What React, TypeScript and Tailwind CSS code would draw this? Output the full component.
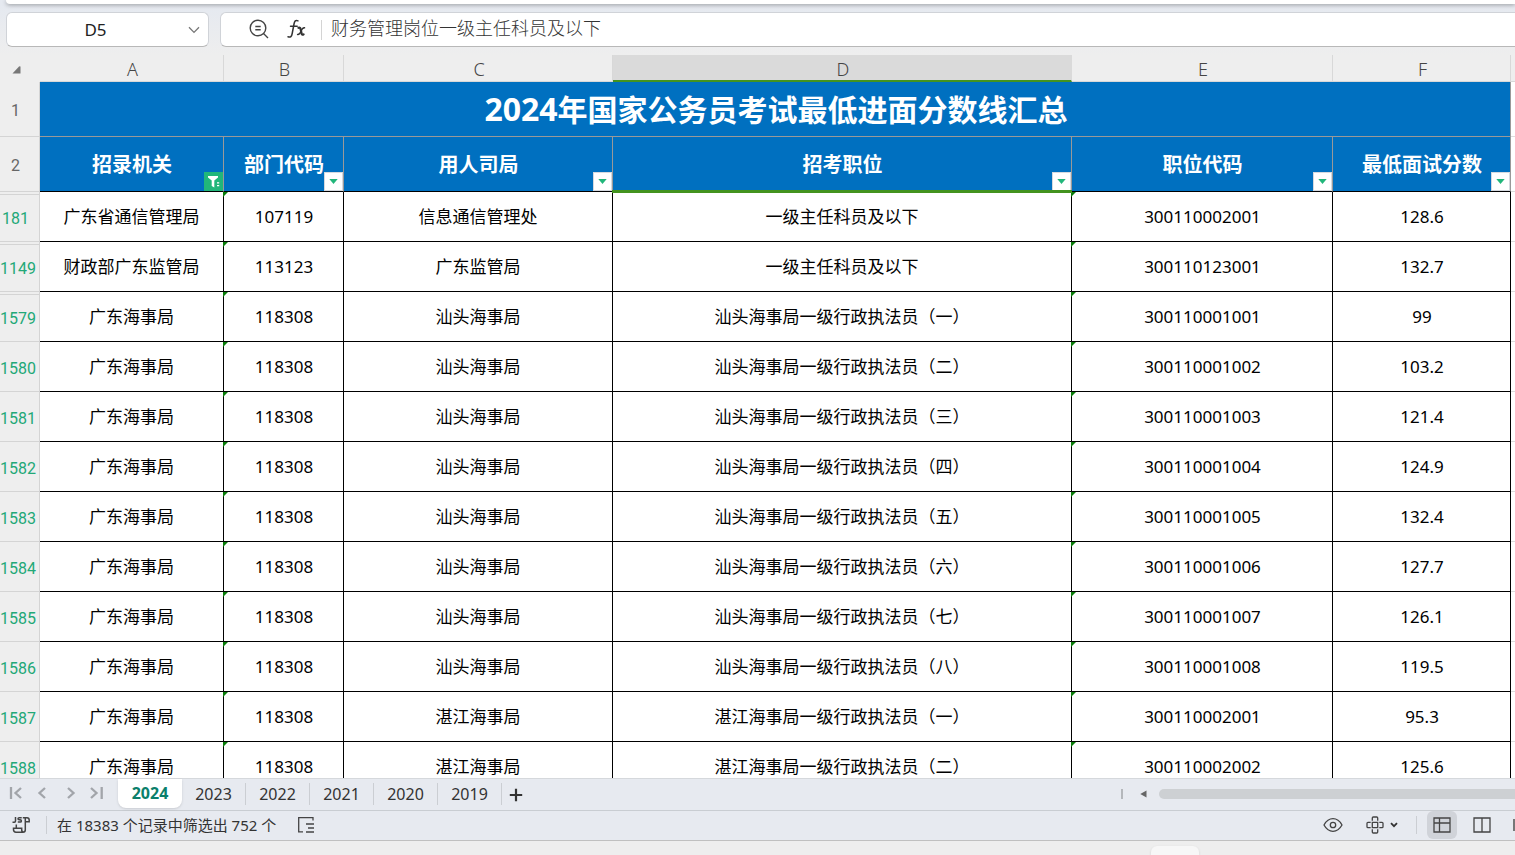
import React from "react";

type Row = {
  n: number;
  gap?: boolean;
  cells: [string, string, string, string, string, string];
};

const haishi = (n: number, bureau: string, ord: string, code: string, score: string, gap = false): Row => ({
  n,
  gap,
  cells: ["广东海事局", "118308", bureau + "海事局", bureau + "海事局一级行政执法员（" + ord + "）", code, score],
});

const rows: Row[] = [
  { n: 181, gap: true, cells: ["广东省通信管理局", "107119", "信息通信管理处", "一级主任科员及以下", "300110002001", "128.6"] },
  { n: 1149, gap: true, cells: ["财政部广东监管局", "113123", "广东监管局", "一级主任科员及以下", "300110123001", "132.7"] },
  haishi(1579, "汕头", "一", "300110001001", "99", true),
  haishi(1580, "汕头", "二", "300110001002", "103.2"),
  haishi(1581, "汕头", "三", "300110001003", "121.4"),
  haishi(1582, "汕头", "四", "300110001004", "124.9"),
  haishi(1583, "汕头", "五", "300110001005", "132.4"),
  haishi(1584, "汕头", "六", "300110001006", "127.7"),
  haishi(1585, "汕头", "七", "300110001007", "126.1"),
  haishi(1586, "汕头", "八", "300110001008", "119.5"),
  haishi(1587, "湛江", "一", "300110002001", "95.3"),
  haishi(1588, "湛江", "二", "300110002002", "125.6"),
];

const letters = ["A", "B", "C", "D", "E", "F"];
const headings = ["招录机关", "部门代码", "用人司局", "招考职位", "职位代码", "最低面试分数"];
const sheets = ["2024", "2023", "2022", "2021", "2020", "2019"];

const rowHead = "border-r border-b border-[#d4d4d4] bg-[#eeeeee] p-0 pt-1 text-center font-['Roboto',sans-serif] text-base leading-6 font-normal";

function FormulaBar() {
  return (
    <div className="flex h-[51px] shrink-0 gap-[11px] bg-linear-to-b from-[#e5e9f0] to-[#eeeeee] pt-2 pb-2 pl-[6px]">
      <div className="flex h-[35px] w-[203px] shrink-0 items-center rounded-md border border-[#d0d3d8] border-b-[#b8b8b8] bg-white">
        <input
          aria-label="名称框"
          defaultValue="D5"
          className="h-full w-[177px] bg-transparent text-center text-[17px] text-[#222222] outline-none"
        />
        <button aria-label="展开名称框" className="flex h-full flex-1 items-center justify-center pr-1">
          <svg width="12" height="8" viewBox="0 0 12 8" fill="none" stroke="#777777" strokeWidth="1.3">
            <path d="M1 1.2 6 6.4 11 1.2" />
          </svg>
        </button>
      </div>
      <div className="flex h-[35px] min-w-0 flex-1 items-center rounded-l-md border border-r-0 border-[#d0d3d8] border-b-[#b8b8b8] bg-white pl-[26px]">
        <button aria-label="缩小" className="flex size-6 items-center justify-center pb-0.5">
          <svg width="22" height="22" viewBox="0 0 22 22" fill="none" stroke="#444444" strokeWidth="1.4">
            <circle cx="10" cy="10" r="7.800" />
            <path d="M15.500 15.500 20 20M7.300 8.500h5.400M7.300 11.800h5.400" />
          </svg>
        </button>
        <button aria-label="插入函数" className="ml-[13px] flex size-6 items-center justify-center pb-0.5">
          <svg width="20" height="20" viewBox="0 0 20 20" fill="none" stroke="#333333" strokeLinecap="round">
            <path strokeWidth="1.5" d="M12 1.8C9.6.6 8.500 2.200 8 5L6.200 14.500C5.700 17.400 4.500 18.800 2 17.700M4.500 7.200h6.700" />
            <path strokeWidth="2.200" d="M12.500 8.800c1.300-.5 1.800.2 2.200 1.700l.9 3.900c.3 1.200.9 1.700 2 1" />
            <path strokeWidth="1.500" d="M18.500 8.800c-1.500-.2-2.700 1.400-3.500 3.400-.8 2-1.800 3.600-3.400 3.300" />
          </svg>
        </button>
        <span className="ml-[13px] h-5 w-px bg-[#d4d4d4]" />
        <input
          aria-label="编辑栏"
          defaultValue="财务管理岗位一级主任科员及以下"
          className="ml-[9px] h-full min-w-0 flex-1 bg-transparent pb-[6px] font-['Noto_Sans_CJK_SC',sans-serif] text-lg font-light text-[#333333] outline-none"
        />
      </div>
    </div>
  );
}

function FilterButton({ active, label }: { active: boolean; label: string }) {
  return active ? (
    <button aria-label={"筛选 " + label} className="absolute right-0 bottom-0 flex h-[19px] w-[19px] items-center justify-center bg-[#21b67a]">
      <svg width="19" height="19" viewBox="0 0 19 19" fill="#ffffff">
        <path d="M4 4h10v1.500L10.300 8.500v7L7.700 14V8.500L4 5.500zM13 10.200h2.200v1.300H13zM13 13h2.200v1.300H13z" />
      </svg>
    </button>
  ) : (
    <button aria-label={"筛选 " + label} className="absolute right-0 bottom-0 flex h-[19px] w-[19px] items-center justify-center border border-[#d5d9df] bg-white">
      <svg width="9" height="5" viewBox="0 0 9 5" fill="#21b67a">
        <path d="M.3 0h8.400L4.500 5z" />
      </svg>
    </button>
  );
}

function Grid() {
  return (
    <div className="min-h-0 flex-1 overflow-hidden bg-white">
      <table className="w-full min-w-[1300px] table-fixed border-separate border-spacing-0">
        <colgroup>
          <col className="w-10" />
          <col className="w-[184px]" />
          <col className="w-[120px]" />
          <col className="w-[269px]" />
          <col />
          <col className="w-[261px]" />
          <col className="w-[178px]" />
          <col className="w-1" />
        </colgroup>
        <thead>
          <tr className="h-[27px] bg-[#eeeeee]">
            <td className="p-0 pt-0.5">
              <svg className="ml-3" width="9" height="8" viewBox="0 0 9 8" fill="#777777">
                <path d="M8.500 1v6.500H.5L7 .6Q8.500-.5 8.500 1z" />
              </svg>
            </td>
            {letters.map((l) => (
              <th
                key={l}
                scope="col"
                className={
                  l === "D"
                    ? "border-r border-b-2 border-r-[#dadada] border-b-[#43931f] bg-[#dadada] p-0 pt-0.5 pl-0.5 text-lg leading-[22px] font-light text-[#444444]"
                    : "border-r border-b border-[#d8d8d8] p-0 pt-0.5 pl-0.5 text-lg leading-[22px] font-light text-[#444444]"
                }
              >
                {l}
              </th>
            ))}
            <td className="border-b border-[#d8d8d8] p-0" />
          </tr>
        </thead>
        <tbody>
          <tr className="h-[55px]">
            <th scope="row" className={rowHead + " pr-2 text-[#666666]"}>1</th>
            <th colSpan={6} className="border-r border-b border-[#999999] bg-[#0070c0] p-0 pl-0.5 text-[30px] leading-9 font-bold text-white">
              <span className="text-[32px]">2024</span>年国家公务员考试最低进面分数线汇总
            </th>
            <td className="border-b border-[#dddddd] p-0" />
          </tr>
          <tr className="h-[55px]">
            <th scope="row" className={rowHead + " pr-2 text-[#666666]"}>2</th>
            {headings.map((h, i) => (
              <th key={h} className="relative border-r border-b border-r-[#999999] border-b-black bg-[#0070c0] p-0 pt-0.5 pl-px text-xl leading-6 font-bold text-white">
                {h}
                <FilterButton active={i === 0} label={h} />
                {i === 3 && <span className="absolute -right-px -bottom-0.5 -left-px z-10 h-[3px] bg-[#43931f]" />}
              </th>
            ))}
            <td className="border-b border-[#dddddd] p-0" />
          </tr>
          {rows.map((r) => (
            <tr key={r.n} className="h-[50px]">
              <th scope="row" className={rowHead + (r.n < 1000 ? " pr-2" : " pr-[3px]") + " relative text-[#22a877]"}>
                {r.gap && <span className="absolute top-0.5 left-0 h-px w-full bg-[#d4d4d4]" />}
                {r.n}
              </th>
              {r.cells.map((c, i) => (
                <td
                  key={i}
                  className={
                    i === 1 || i > 3
                      ? "relative border-r border-b border-black p-0 pl-px text-center text-[17px] leading-6 text-black"
                      : "relative border-r border-b border-black p-0 text-center text-[17px] leading-6 text-black"
                  }
                >
                  {(i === 1 || i === 4) && (
                    <svg className="absolute top-0 -left-px" width="5" height="5" viewBox="0 0 5 5" fill="#0a7d0a">
                      <path d="M0 0h5L0 5z" />
                    </svg>
                  )}
                  {c}
                </td>
              ))}
              <td className="border-b border-[#dddddd] p-0" />
            </tr>
          ))}
        </tbody>
      </table>
    </div>
  );
}

const navIcons: [string, string][] = [
  ["第一张", "M3 1v12M13 2 7.500 7l5.500 5"],
  ["上一张", "M10 2 4.500 7l5.500 5"],
  ["下一张", "M6 2l5.500 5L6 12"],
  ["最后一张", "M2 2l5.500 5L2 12M12.700 1v12"],
];

function SheetBar() {
  return (
    <div className="flex h-[33px] shrink-0 border-t border-b border-t-[#d5d8dc] border-b-[#c9cdd2] bg-[#e7eaf0]">
      <nav aria-label="工作表导航" className="flex h-7 w-[118px] shrink-0 items-center gap-[13px] pl-2">
        {navIcons.map(([label, d]) => (
          <button key={label} aria-label={label}>
            <svg width="14" height="14" viewBox="0 0 14 14" fill="none" stroke="#a2a5aa" strokeWidth="2.300">
              <path d={d} />
            </svg>
          </button>
        ))}
      </nav>
      {sheets.map((s, i) =>
        i === 0 ? (
          <button key={s} className="h-[29px] w-16 rounded-b-lg bg-white pb-0.5 text-base leading-7 font-bold text-[#0b7f6b] shadow-sm">
            {s}
          </button>
        ) : (
          <button key={s} className="flex h-[30px] w-16 items-center justify-center text-base leading-6 text-[#333333]">
            <span className="flex-1">{s}</span>
            <span className="h-[22px] w-px bg-[#cbced3]" />
          </button>
        ),
      )}
      <button aria-label="新建工作表" className="flex w-7 items-center justify-center">
        <svg width="14" height="14" viewBox="0 0 14 14" stroke="#333333" strokeWidth="2.200">
          <path d="M7 .8v12.400M.8 7h12.400" />
        </svg>
      </button>
      <div className="ml-auto flex h-[30px] w-[26%] items-center">
        <span className="h-[10px] w-0.5 bg-[#b4b7bb]" />
        <button aria-label="向左滚动" className="ml-[17px] flex h-5 w-[9px] items-center">
          <svg width="7" height="8" viewBox="0 0 7 8" fill="#666666">
            <path d="M6.500.5v7L.3 4z" />
          </svg>
        </button>
        <span className="ml-[10px] h-[10px] flex-1 rounded-l-full bg-[#cdd0d3]" />
      </div>
    </div>
  );
}

function StatusBar() {
  return (
    <div className="flex h-[30px] shrink-0 items-center overflow-hidden border-b border-[#c0c0c0] bg-[#e7eaf0] pb-0.5 pl-3">
      <button aria-label="JS 宏" className="flex">
        <svg width="18" height="18" viewBox="0 0 18 18" fill="none" stroke="#444444" strokeWidth="1.500">
          <path d="M3.500 1v4q0 1.200-1.200 1.200H.5M9.700 1.700H7.200q-1.200 0-1.200 1t1.200 1.100h1q1.200 0 1.200 1.100t-1.200 1.200H5.800" />
          <path d="M10.800 1.700H15q2.200 0 2.200 2.300v1.700h-3.700M13.300 2v11.700q0 2.500-2.300 2.500H4q-2.500 0-2.500-2.700v-1.200h8.200v1.500q0 2.500 2 2.500M4.300 8.500v3.700" />
        </svg>
      </button>
      <span className="ml-4 h-[18px] w-px bg-[#cbced3]" />
      <p className="ml-[10px] text-[15px] leading-5 whitespace-nowrap text-[#333333]">在 18383 个记录中筛选出 752 个</p>
      <button aria-label="筛选列表" className="ml-[21px] flex">
        <svg width="18" height="18" viewBox="0 0 18 18" fill="none" stroke="#444444" strokeWidth="1.300">
          <path d="M16 4.500V1.700H1.700v14.200H6M9 8h8M11 12h6M9 16h8" />
        </svg>
      </button>
      <div className="ml-auto flex h-full items-center">
        <button aria-label="护眼模式" className="flex">
          <svg width="20" height="16" viewBox="0 0 20 16" fill="none" stroke="#444444" strokeWidth="1.300">
            <path d="M1 8Q4.500 1.700 10 1.700T19 8Q15.500 14.300 10 14.300T1 8z" />
            <circle cx="10" cy="8" r="2.700" />
          </svg>
        </button>
        <button aria-label="阅读模式" className="ml-[23px] flex items-center gap-[6px]">
          <svg width="18" height="18" viewBox="0 0 18 18" fill="none" stroke="#444444" strokeWidth="1.300">
            <path d="M6.300 6.300h5.400v5.400H6.300zM6.300 4.700V2q0-1 1-1h3.400q1 0 1 1v2.700M6.300 13.300V16q0 1 1 1h3.400q1 0 1-1v-2.700M4.700 6.300H2q-1 0-1 1v3.400q0 1 1 1h2.700M13.300 6.300H16q1 0 1 1v3.400q0 1-1 1h-2.700" />
          </svg>
          <svg width="8" height="6" viewBox="0 0 8 6" fill="none" stroke="#333333" strokeWidth="1.800">
            <path d="M1 1.200 4 4.200l3-3" />
          </svg>
        </button>
        <span className="ml-[18px] h-[18px] w-px bg-[#cbced3]" />
        <button aria-label="普通视图" className="ml-[10px] flex h-7 w-[30px] items-center justify-center rounded-md bg-[#d0d3d9]">
          <svg width="18" height="16" viewBox="0 0 18 16" fill="none" stroke="#444444" strokeWidth="1.300">
            <path d="M1 1h16v14H1zM1 6h16M6.500 1v14" />
          </svg>
        </button>
        <button aria-label="分页预览" className="ml-4 flex">
          <svg width="18" height="16" viewBox="0 0 18 16" fill="none" stroke="#444444" strokeWidth="1.300">
            <path d="M1 1h16v14H1zM9 1v14" />
          </svg>
        </button>
        <span className="ml-[22px] h-3 w-0.5 bg-[#777777]" />
      </div>
    </div>
  );
}

export default function App() {
  return (
    <div className="flex h-screen flex-col overflow-hidden bg-[#eeeeee] font-['Noto_Sans','Noto_Sans_CJK_SC',sans-serif]">
      <div className="shrink-0 bg-[#e5e9f0] pl-[6px]">
        <div className="relative h-1 rounded-bl-md bg-white shadow-[0_1px_4px_rgba(0,0,0,0.35)]" />
      </div>
      <FormulaBar />
      <Grid />
      <SheetBar />
      <StatusBar />
      <div className="flex h-[14px] shrink-0 justify-end pt-[5px] pr-[316px]">
        <span className="w-12 rounded-t-md bg-[#f7f7f7] shadow-sm" />
      </div>
    </div>
  );
}
